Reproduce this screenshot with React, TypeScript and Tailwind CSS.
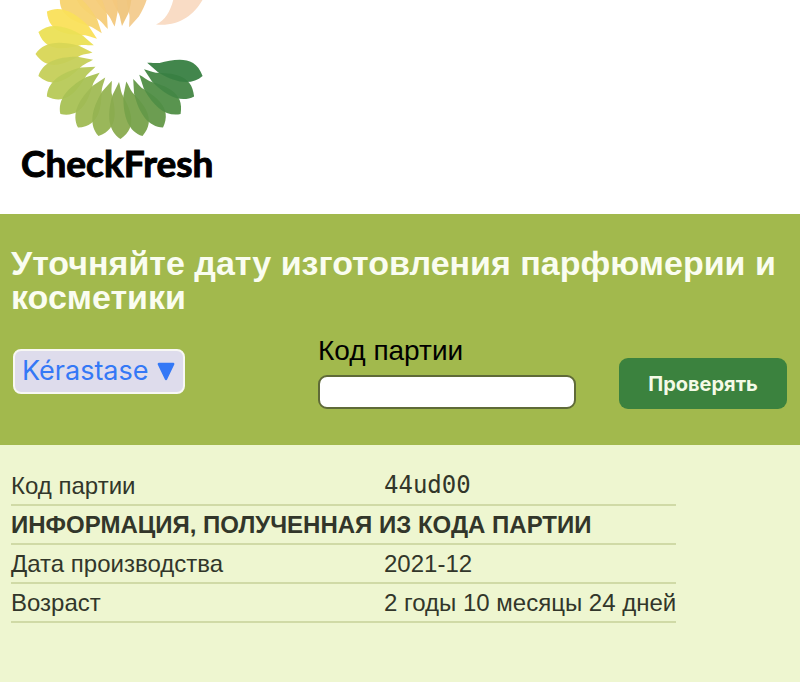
import { useState } from "react";

const petals = [
  "#f3cb8d",
  "#efc57c",
  "#f3c87d",
  "#f5cc79",
  "#f7d36f",
  "#fae05a",
  "#ebe055",
  "#d8d655",
  "#c5cf58",
  "#b7c957",
  "#a8c154",
  "#a0bb54",
  "#95b351",
  "#8aab4f",
  "#77a24a",
  "#649848",
  "#508e46",
  "#438644",
  "#388042",
];

const brands = ["Kérastase", "Lancôme", "L'Oréal", "Vichy"];

function Logo() {
  return (
    <a href="#" className="inline-block text-black">
      <svg viewBox="0 0 192 140" className="block h-[140px] w-48" aria-hidden="true">
        <path d="M135 24.5C145 20 150 10 153 -3H183C175 14 158 27 135 24.5Z" fill="#f9dcc5" />
        {petals.map((color, i) => (
          <path
            key={color}
            d="M28 1.5C33 0 36 0 40 -1.5C54 -9 72 -19 85 0C77 12 62 14 41 8Z"
            fill={color}
            fillOpacity="0.95"
            transform={`translate(99.5 54) rotate(${285 - i * 15})`}
          />
        ))}
      </svg>
      <span className="block font-['Lato',sans-serif] text-[37px] leading-[46px] font-bold [-webkit-text-stroke:1px_black]">
        CheckFresh
      </span>
    </a>
  );
}

function BatchForm() {
  const [brand, setBrand] = useState(brands[0]);
  const [code, setCode] = useState("");

  return (
    <form
      className="flex items-start justify-between pt-5 pr-0.5 pl-0.5"
      onSubmit={(e) => e.preventDefault()}
    >
      <div className="relative mt-[15px]">
        <select
          aria-label="Марка"
          value={brand}
          onChange={(e) => setBrand(e.target.value)}
          className="h-[45px] w-[172px] appearance-none rounded-lg border-2 border-[#f8f8f4] bg-[#dedcec] pl-[7px] font-['Inter',sans-serif] text-[27px] text-[#3478f6]"
        >
          {brands.map((name) => (
            <option key={name}>{name}</option>
          ))}
        </select>
        <svg
          viewBox="0 0 18 19"
          className="pointer-events-none absolute top-[13px] right-2.5 h-[19px] w-[18px]"
          aria-hidden="true"
        >
          <path d="M1.8 2H16.2L9 17Z" fill="#3478f6" stroke="#3478f6" strokeWidth="2.4" strokeLinejoin="round" />
        </svg>
      </div>
      <div className="ml-[90px] flex w-[258px] flex-col gap-2">
        <label htmlFor="code" className="text-[28px] leading-[33px] text-black">
          Код партии
        </label>
        <input
          id="code"
          value={code}
          onChange={(e) => setCode(e.target.value)}
          className="h-[34px] w-full rounded-[9px] border-2 border-[#5f6a38] bg-white px-2 text-2xl outline-none"
        />
      </div>
      <button
        type="submit"
        className="mt-6 h-[51px] w-[168px] rounded-[9px] bg-[#3b823e] font-['Inter',sans-serif] text-xl font-bold text-[#f4fae6]"
      >
        Проверять
      </button>
    </form>
  );
}

export default function App() {
  return (
    <div className="bg-white font-['Liberation_Sans',sans-serif]">
      <header className="h-[214px] overflow-hidden pl-[21px]">
        <Logo />
      </header>
      <section className="bg-[#a2b94d] px-[11px] pt-8 pb-9">
        <h1 className="text-[34px] leading-[34px] font-bold text-[#fafdf0]">
          Уточняйте дату изготовления парфюмерии и косметики
        </h1>
        <BatchForm />
      </section>
      <section className="bg-[#eef6d0] px-[11px] pt-[22px] pb-[59px] text-2xl leading-[37px] text-[#32362a]">
        <table className="border-collapse text-left">
          <tbody>
            <tr className="border-b-2 border-[#d0daa6]">
              <th className="w-[373px] p-0 font-normal">Код партии</th>
              <td className="p-0 font-['DejaVu_Sans_Mono',monospace]">44ud00</td>
            </tr>
            <tr className="border-b-2 border-[#d0daa6]">
              <th colSpan={2} className="p-0 font-bold">
                ИНФОРМАЦИЯ, ПОЛУЧЕННАЯ ИЗ КОДА ПАРТИИ
              </th>
            </tr>
            <tr className="border-b-2 border-[#d0daa6]">
              <th className="p-0 font-normal">Дата производства</th>
              <td className="p-0">2021-12</td>
            </tr>
            <tr className="border-b-2 border-[#d0daa6]">
              <th className="p-0 font-normal">Возраст</th>
              <td className="p-0">2 годы 10 месяцы 24 дней</td>
            </tr>
          </tbody>
        </table>
      </section>
    </div>
  );
}
